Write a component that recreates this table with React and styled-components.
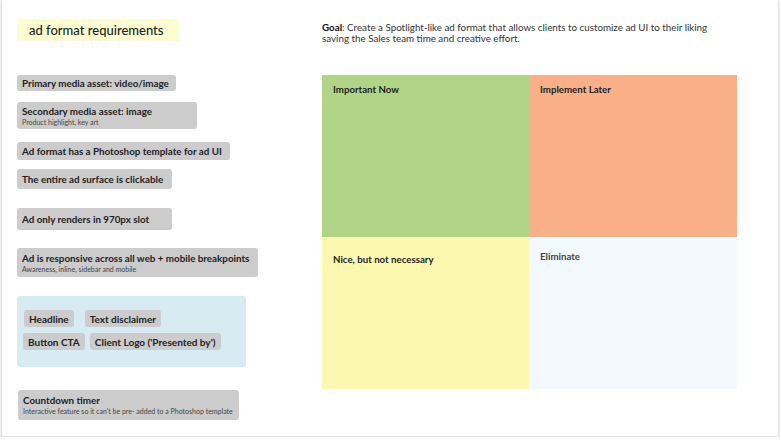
import React from 'react';
import styled, { createGlobalStyle } from 'styled-components';

const Global = createGlobalStyle`
  html, body {
    margin: 0;
    padding: 0;
    background: #ffffff;
    overflow: hidden;
  }
  body {
    font-family: Lato, "Liberation Sans", sans-serif;
    color: #222;
  }
`

const Board = styled.div`
  display: flex;
  width: 778px;
  height: 437px;
  margin-left: 1px;
  padding-left: 15px;
  padding-top: 19px;
  box-sizing: border-box;
  border: 1px solid #e2e2e2;
  border-top: none;
  box-shadow: 0 1px 2px rgba(0, 0, 0, 0.18);
  background: #fff;
`

const LeftCol = styled.div`
  display: flex;
  flex-direction: column;
  align-items: flex-start;
  width: 305px;
  flex-shrink: 0;
`

const Title = styled.div`
  display: flex;
  align-items: center;
  width: 162px;
  height: 22px;
  padding-left: 12px;
  box-sizing: border-box;
  background: #fdfdd2;
  font-size: 13px;
  font-weight: 500;
  color: #1e1e1e;
`

const Note = styled.div`
  display: flex;
  flex-direction: column;
  justify-content: center;
  width: ${p => p.$w}px;
  height: ${p => p.$h}px;
  margin-top: ${p => p.$mt}px;
  margin-left: ${p => p.$ml || 0}px;
  padding-left: 5px;
  box-sizing: border-box;
  background: #cccccc;
  border-radius: 3px;
`

const NoteTitle = styled.div`
  font-size: 9.8px;
  font-weight: 700;
  line-height: 12px;
  color: #222;
`

const NoteSub = styled.div`
  font-size: 7px;
  line-height: 9px;
  color: #444;
  margin-top: 1px;
`

const ChipBox = styled.div`
  display: flex;
  flex-direction: column;
  gap: 6px;
  width: 229px;
  height: 71px;
  margin-top: 19px;
  padding-top: 14px;
  box-sizing: border-box;
  background: #d6ebf2;
  border-radius: 3px;
`

const ChipRow = styled.div`
  display: flex;
  gap: ${p => p.$gap}px;
  padding-left: ${p => p.$pl}px;
`

const Chip = styled.div`
  display: flex;
  align-items: center;
  height: 17px;
  padding: 0 5px;
  background: #cccccc;
  border-radius: 3px;
  font-size: 10px;
  font-weight: 700;
  color: #222;
`

const RightCol = styled.div`
  display: flex;
  flex-direction: column;
  margin-top: 3px;
`

const Goal = styled.p`
  margin: 0;
  font-size: 9.8px;
  line-height: 11px;
  color: #333;

  b {
    color: #111;
  }
`

const Matrix = styled.div`
  display: grid;
  grid-template-columns: 207px 208px;
  grid-template-rows: 162px 152px;
  margin-top: 31px;
`

const Quadrant = styled.div`
  background: ${p => p.$bg};
  padding: ${p => p.$pt}px 11px 0;
  font-size: 9.7px;
  font-weight: 700;
  color: ${p => p.$color || '#1e1e1e'};
`

export default function App() {
  return (
    <>
      <Global />
      <Board>
        <LeftCol>
          <Title>ad format requirements</Title>
          <Note $w={159} $h={16} $mt={34}>
            <NoteTitle>Primary media asset: video/image</NoteTitle>
          </Note>
          <Note $w={180} $h={27} $mt={11}>
            <NoteTitle>Secondary media asset: image</NoteTitle>
            <NoteSub>Product highlight, key art</NoteSub>
          </Note>
          <Note $w={213} $h={18} $mt={13}>
            <NoteTitle>Ad format has a Photoshop template for ad UI</NoteTitle>
          </Note>
          <Note $w={155} $h={20} $mt={9}>
            <NoteTitle>The entire ad surface is clickable</NoteTitle>
          </Note>
          <Note $w={155} $h={22} $mt={19}>
            <NoteTitle>Ad only renders in 970px slot</NoteTitle>
          </Note>
          <Note $w={241} $h={29} $mt={18}>
            <NoteTitle>Ad is responsive across all web + mobile breakpoints</NoteTitle>
            <NoteSub>Awareness, inline, sidebar and mobile</NoteSub>
          </Note>
          <ChipBox>
            <ChipRow $pl={7} $gap={11}>
              <Chip>Headline</Chip>
              <Chip>Text disclaimer</Chip>
            </ChipRow>
            <ChipRow $pl={6} $gap={5}>
              <Chip>Button CTA</Chip>
              <Chip>Client Logo ('Presented by')</Chip>
            </ChipRow>
          </ChipBox>
          <Note $w={221} $h={30} $mt={23} $ml={1}>
            <NoteTitle>Countdown timer</NoteTitle>
            <NoteSub>Interactive feature so it can't be pre- added to a Photoshop template</NoteSub>
          </Note>
        </LeftCol>
        <RightCol>
          <Goal>
            <b>Goal</b>: Create a Spotlight-like ad format that allows clients to customize ad UI to their liking
            <br />
            saving the Sales team time and creative effort.
          </Goal>
          <Matrix>
            <Quadrant $bg="#b1d586" $pt={8}>Important Now</Quadrant>
            <Quadrant $bg="#f9b088" $pt={8}>Implement Later</Quadrant>
            <Quadrant $bg="#fdf8b0" $pt={16}>Nice, but not necessary</Quadrant>
            <Quadrant $bg="#f3faff" $pt={13} $color="#444">Eliminate</Quadrant>
          </Matrix>
        </RightCol>
      </Board>
    </>
  );
}
